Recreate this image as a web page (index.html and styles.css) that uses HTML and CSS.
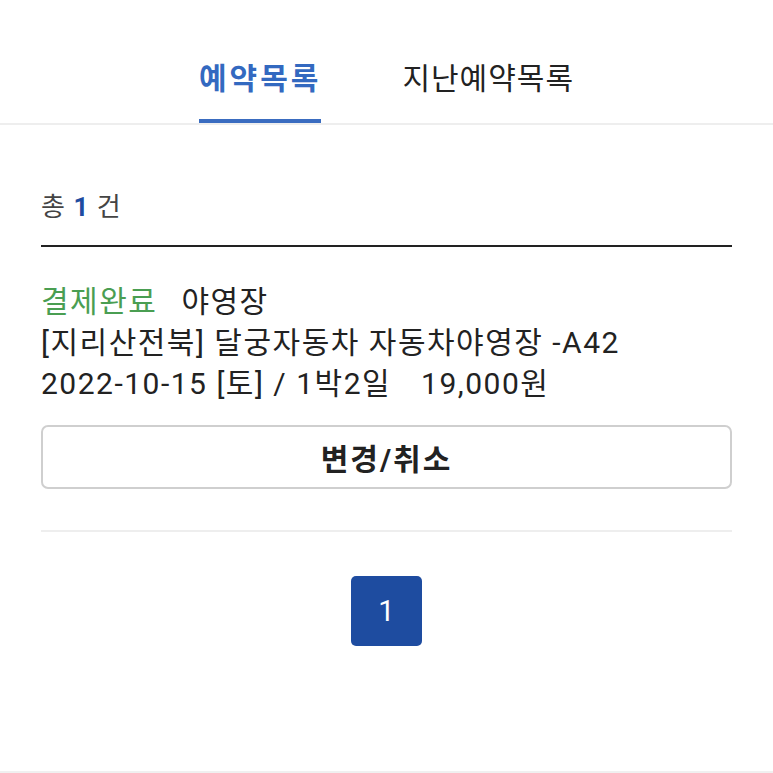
FILE: index.html
```html
<!DOCTYPE html>
<html lang="ko">
<head>
<meta charset="utf-8">
<title>예약목록</title>
<link rel="stylesheet" href="styles.css">
</head>
<body>
<div class="page">
  <nav class="tabs">
    <a class="tab active">예약목록</a>
    <a class="tab">지난예약목록</a>
  </nav>
  <main class="content">
    <div class="count">총 <b>1</b> 건</div>
    <div class="item">
      <div class="line"><span class="status">결제완료</span><span class="type">야영장</span></div>
      <div class="line">[지리산전북] 달궁자동차 자동차야영장 -A42</div>
      <div class="line">2022-10-15 [토] / 1박2일<span class="price">19,000원</span></div>
      <button class="btn">변경/취소</button>
    </div>
    <div class="pager"><span class="pg current">1</span></div>
  </main>
</div>
</body>
</html>
```

FILE: styles.css
```css
html, body {
  margin: 0;
  padding: 0;
  background: #fff;
}
body {
  font-family: Roboto, "Noto Sans CJK KR", "Noto Sans", sans-serif;
  color: #222;
}
.page {
  min-height: 771px;
  border-bottom: 2px solid #f0f0f0;
}
.tabs {
  display: flex;
  justify-content: center;
  gap: 84px;
  border-bottom: 2px solid #eeeeee;
}
.tab {
  display: block;
  padding-top: 59px;
  padding-bottom: 20px;
  line-height: 40px;
  font-size: 30px;
  color: #222;
  border-bottom: 4px solid transparent;
  letter-spacing: 1px;
}
.tab.active {
  color: #3369c0;
  font-weight: 700;
  border-bottom-color: #3a6cc0;
  letter-spacing: 3px;
  margin-right: -3px;
}
.content {
  padding: 0 41px;
}
.count {
  padding-top: 67px;
  padding-bottom: 23px;
  line-height: 30px;
  font-size: 26px;
  color: #444;
  border-bottom: 2px solid #222;
  word-spacing: 2px;
}
.count b {
  color: #1e4ca0;
  font-weight: 700;
}
.item {
  padding-top: 34px;
  padding-bottom: 41px;
  border-bottom: 2px solid #eeeeee;
}
.line {
  font-size: 30px;
  line-height: 41px;
  color: #222;
  letter-spacing: 1.5px;
}
.status {
  color: #4a9e52;
  margin-right: 24px;
}
.price {
  margin-left: 30px;
}
.btn {
  display: block;
  box-sizing: border-box;
  width: 100%;
  height: 64px;
  margin-top: 21px;
  border: 2px solid #cfcfcf;
  border-radius: 7px;
  background: #fff;
  font-family: inherit;
  font-size: 30px;
  font-weight: 700;
  color: #222;
  letter-spacing: 2px;
}
.pager {
  display: flex;
  justify-content: center;
  margin-top: 44px;
}
.pg {
  display: flex;
  align-items: center;
  justify-content: center;
  width: 71px;
  height: 70px;
  border-radius: 5px;
  font-size: 29px;
}
.pg.current {
  background: #1e4ca0;
  color: #fff;
}
```
